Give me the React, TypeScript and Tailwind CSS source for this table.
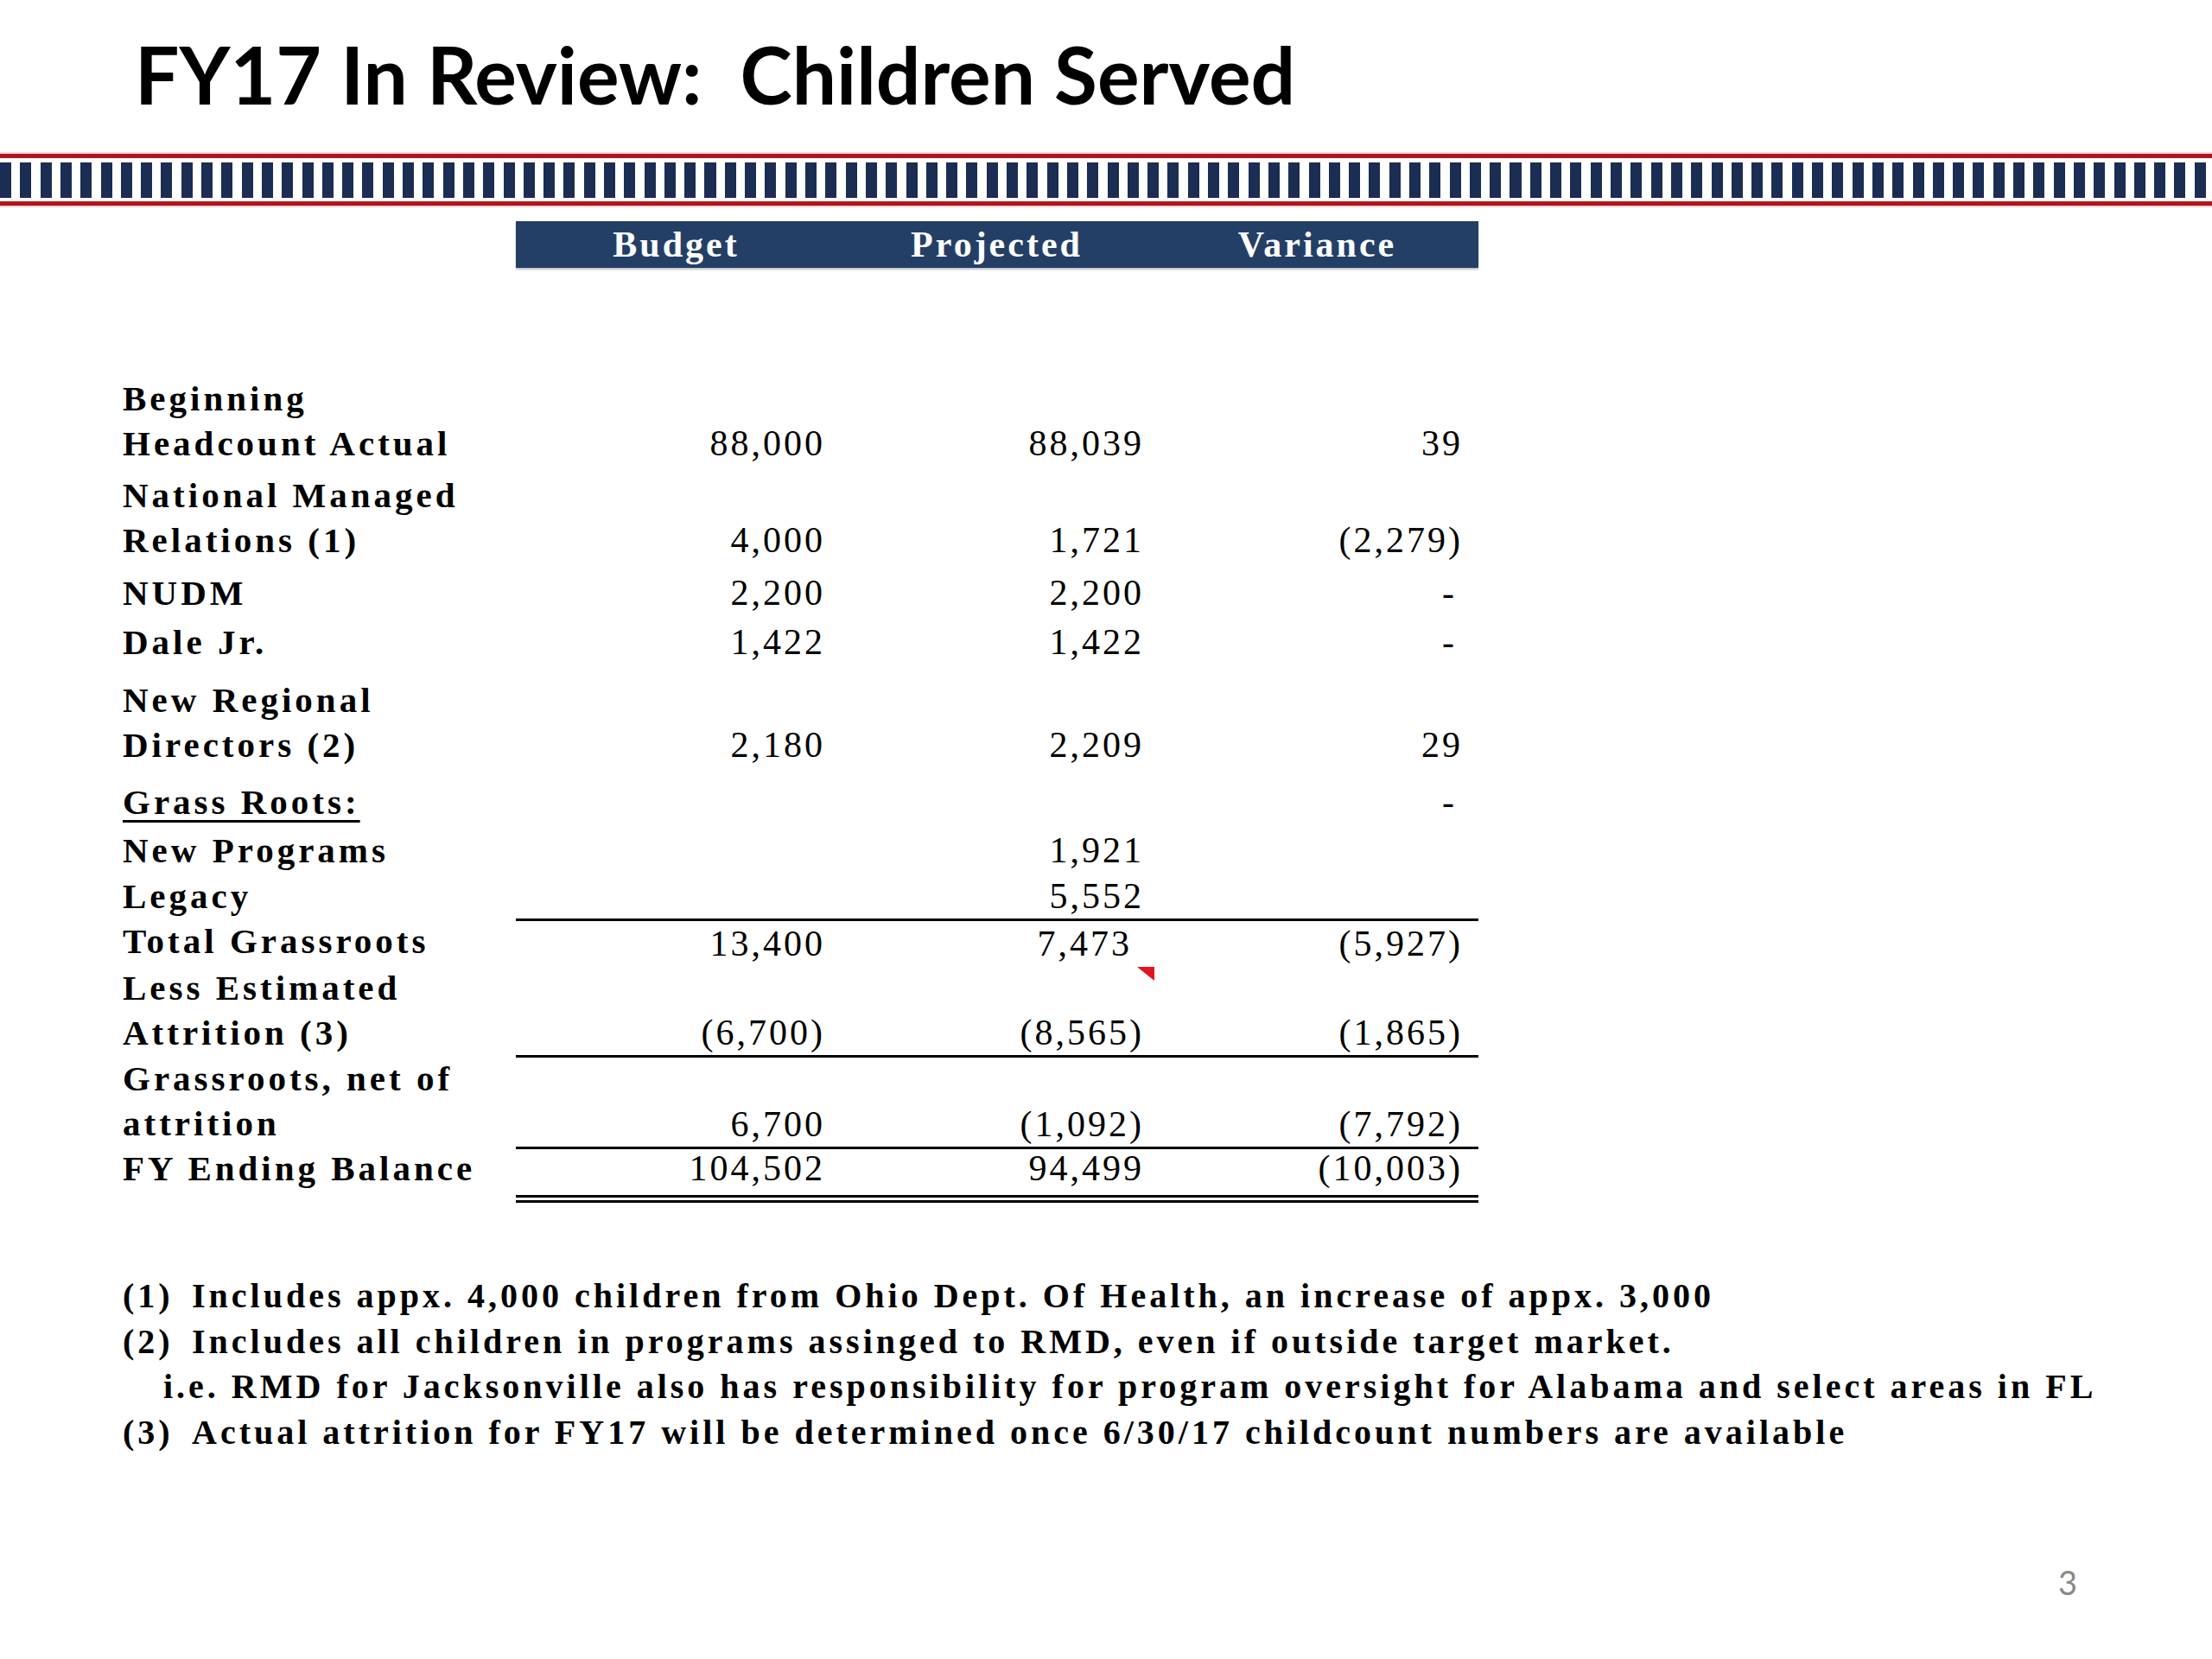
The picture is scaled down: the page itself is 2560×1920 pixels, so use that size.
import React from "react";

type RowProps = {
  label: string[];
  vals: [string, string, string];
  className?: string;
  numClass?: string;
  padClass?: string;
  underline?: boolean;
  flag?: boolean;
  tight?: [boolean, boolean, boolean];
};

const serif = "font-['Liberation_Serif','Times_New_Roman',serif]";

const Row: React.FC<RowProps> = ({ label, vals, className = "", numClass = "", padClass = "", underline, flag, tight }) => {
  const pads = ["pr-[13px]", "pr-[15px]", "pr-[17px]"];
  return (
    <div className={`flex ${className}`}>
      <div className={`w-[455px] flex flex-col font-bold text-[41px] tracking-[4px] text-black ${padClass}`}>
        {label.map((l) => (
          <div key={l} className="h-[52px] leading-[52px] whitespace-nowrap">
            {underline ? (
              <span className="underline decoration-[3px] underline-offset-[7px]">{l}</span>
            ) : (
              l
            )}
          </div>
        ))}
      </div>
      <div className={`relative w-[1114px] flex items-end ${numClass}`}>
        {vals.map((v, i) => (
          <div
            key={i}
            className={`w-[371px] h-[52px] leading-[52px] text-right text-[42px] tracking-[3px] text-black ${
              v === "-" ? "pr-[24px]" : tight && tight[i] ? "pr-[29px]" : pads[i]
            }`}
          >
            {v}
          </div>
        ))}
        {flag && (
          <svg className="absolute top-[2px] left-[719px]" width="20" height="16" viewBox="0 0 20 16">
            <polygon points="0,0 20,0 20,16" fill="#e3141c" />
          </svg>
        )}
      </div>
    </div>
  );
};

const App: React.FC = () => {
  return (
    <div className="w-[2560px] h-[1920px] bg-white overflow-hidden">
      {/* TITLE */}
      <h1 className="pt-[40px] pl-[156px] h-[131px] text-[91px] leading-none font-bold tracking-[0px] text-black font-['Lato','Open_Sans',sans-serif] whitespace-pre">
        FY17 In Review:  Children Served
      </h1>

      {/* STRIPE BAND */}
      <div className="mt-[45px] flex flex-col">
        <div className="h-[2px] bg-[#f3d6d6]" />
        <div className="h-[5px] bg-[#b0141c]" />
        <div className="h-[5px] bg-white" />
        <div className="h-[41px] bg-[repeating-linear-gradient(90deg,#1b2d52_0px,#1b2d52_13px,#ffffff_13px,#ffffff_23.3px)]" />
        <div className="h-[4px] bg-white" />
        <div className="h-[5px] bg-[#b0141c]" />
        <div className="h-[2px] bg-[#f3d6d6]" />
      </div>

      {/* TABLE */}
      <div className={`ml-[142px] mt-[16px] ${serif}`}>
        <div className="flex">
          <div className="w-[455px]" />
          <div className="w-[1114px] h-[54px] bg-[#243f66] shadow-[0_2px_2px_rgba(0,0,0,0.25)] flex items-center text-white font-bold text-[42px] tracking-[3px]">
            <div className="w-[371px] text-center">Budget</div>
            <div className="w-[371px] text-center">Projected</div>
            <div className="w-[371px] text-center">Variance</div>
          </div>
        </div>

        <Row className="mt-[125px]" label={["Beginning", "Headcount Actual"]} vals={["88,000", "88,039", "39"]} />
        <Row className="mt-[8px]" label={["National Managed", "Relations (1)"]} vals={["4,000", "1,721", "(2,279)"]} />
        <Row className="mt-[9px]" label={["NUDM"]} vals={["2,200", "2,200", "-"]} />
        <Row className="mt-[5px]" label={["Dale Jr."]} vals={["1,422", "1,422", "-"]} />
        <Row className="mt-[15px]" label={["New Regional", "Directors (2)"]} vals={["2,180", "2,209", "29"]} />
        <Row className="mt-[14px]" label={["Grass Roots:"]} vals={["", "", "-"]} underline />
        <Row className="mt-[4px]" label={["New Programs"]} vals={["", "1,921", ""]} />
        <Row className="mt-[1px]" label={["Legacy"]} vals={["", "5,552", ""]} />
        <Row
          label={["Total Grassroots"]}
          vals={["13,400", "7,473", "(5,927)"]}
          numClass="border-t-[3px] border-black"
          tight={[false, true, false]}
        />
        <Row
          className="-mt-[1px]"
          label={["Less Estimated", "Attrition (3)"]}
          vals={["(6,700)", "(8,565)", "(1,865)"]}
          numClass="border-b-[3px] border-black"
          padClass="pb-[3px]"
          flag
        />
        <Row
          className="-mt-[2px]"
          label={["Grassroots, net of", "attrition"]}
          vals={["6,700", "(1,092)", "(7,792)"]}
          numClass="border-b-[3px] border-black"
          padClass="pb-[4px]"
        />
        <Row
          className="-mt-[4px]"
          label={["FY Ending Balance"]}
          vals={["104,502", "94,499", "(10,003)"]}
          numClass="border-b-[9px] border-double border-black pb-[5px]"
        />
      </div>

      {/* FOOTNOTES */}
      <div className={`mt-[82px] ml-[142px] font-bold text-[40px] tracking-[4px] leading-[52.5px] text-black whitespace-nowrap ${serif}`}>
        <div className="flex">
          <span className="w-[80px]">(1)</span>
          <span>Includes appx. 4,000 children from Ohio Dept. Of Health, an increase of appx. 3,000</span>
        </div>
        <div className="flex">
          <span className="w-[80px]">(2)</span>
          <span>Includes all children in programs assinged to RMD, even if outside target market.</span>
        </div>
        <div className="pl-[47px]">
          i.e. RMD for Jacksonville also has responsibility for program oversight for Alabama and select areas in FL
        </div>
        <div className="flex">
          <span className="w-[80px]">(3)</span>
          <span>Actual attrition for FY17 will be determined once 6/30/17 childcount numbers are available</span>
        </div>
      </div>

      {/* PAGE NUMBER */}
      <div className="mt-[128px] pr-[156px] flex justify-end text-[38px] leading-none text-[#898989] font-['Lato','Open_Sans',sans-serif]">
        3
      </div>
    </div>
  );
};

export default App;
